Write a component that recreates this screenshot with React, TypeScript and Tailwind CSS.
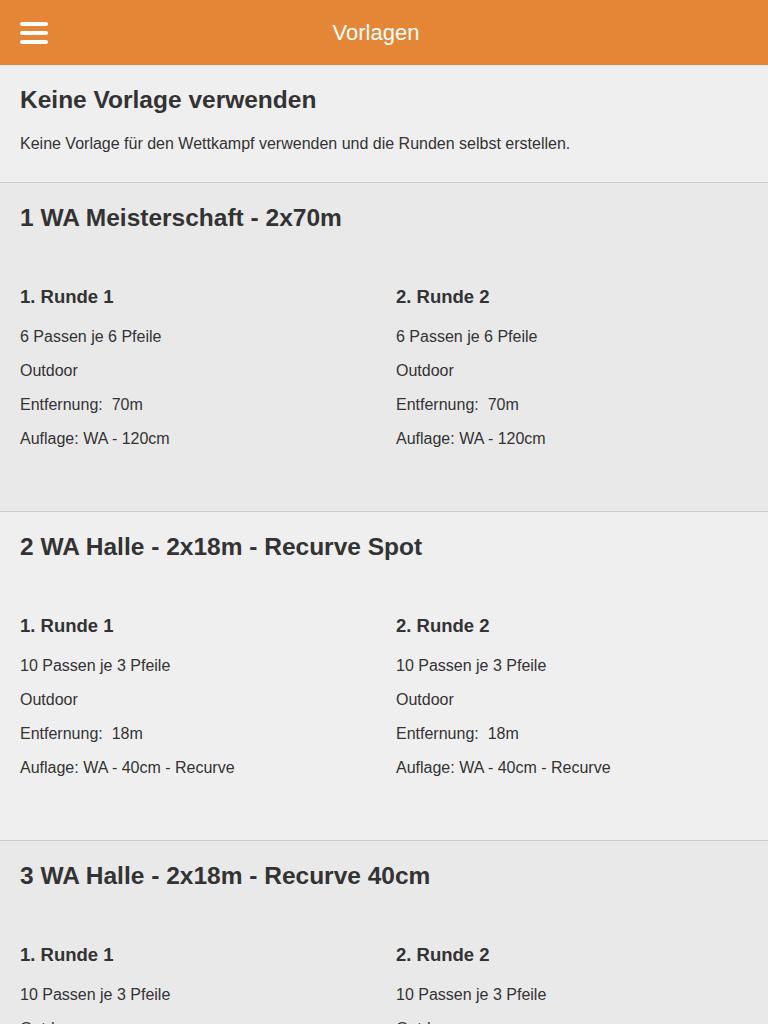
import React from "react";

type Round = {
  title: string;
  ends: string;
  place: string;
  distance: string;
  target: string;
};

type Template = {
  name: string;
  rounds: Round[];
};

const templates: Template[] = [
  {
    name: "1 WA Meisterschaft - 2x70m",
    rounds: [
      { title: "1. Runde 1", ends: "6 Passen je 6 Pfeile", place: "Outdoor", distance: "70m", target: "WA - 120cm" },
      { title: "2. Runde 2", ends: "6 Passen je 6 Pfeile", place: "Outdoor", distance: "70m", target: "WA - 120cm" },
    ],
  },
  {
    name: "2 WA Halle - 2x18m - Recurve Spot",
    rounds: [
      { title: "1. Runde 1", ends: "10 Passen je 3 Pfeile", place: "Outdoor", distance: "18m", target: "WA - 40cm - Recurve" },
      { title: "2. Runde 2", ends: "10 Passen je 3 Pfeile", place: "Outdoor", distance: "18m", target: "WA - 40cm - Recurve" },
    ],
  },
  {
    name: "3 WA Halle - 2x18m - Recurve 40cm",
    rounds: [
      { title: "1. Runde 1", ends: "10 Passen je 3 Pfeile", place: "Outdoor", distance: "18m", target: "WA - 40cm" },
      { title: "2. Runde 2", ends: "10 Passen je 3 Pfeile", place: "Outdoor", distance: "18m", target: "WA - 40cm" },
    ],
  },
];

const App: React.FC = () => {
  return (
    <div className="h-[1024px] overflow-hidden bg-[#efefef] font-['Liberation_Sans',Arial,sans-serif] text-[#333333]">
      {/* Header */}
      <header className="flex h-[65px] items-center bg-[#e48635] px-5">
        <button className="flex w-[28px] flex-col gap-[5px] focus:outline-none">
          <span className="block h-[4px] w-[28px] rounded-sm bg-white" />
          <span className="block h-[4px] w-[28px] rounded-sm bg-white" />
          <span className="block h-[4px] w-[28px] rounded-sm bg-white" />
        </button>
        <h1 className="flex-1 pr-[44px] text-center text-[22px] text-white">Vorlagen</h1>
      </header>

      {/* No template */}
      <section className="border-b border-[#cccccc] bg-[#efefef] px-5 pt-[21px] pb-[28px]">
        <h2 className="text-[24.5px] font-bold leading-[28px]">Keine Vorlage verwenden</h2>
        <p className="mt-[20px] text-[16px] leading-[20px]">
          Keine Vorlage für den Wettkampf verwenden und die Runden selbst erstellen.
        </p>
      </section>

      {/* Templates */}
      {templates.map((t, i) => (
        <section
          key={t.name}
          className={
            "border-b border-[#cccccc] px-5 pt-[21px] pb-[62px] " +
            (i % 2 === 0 ? "bg-[#e9e9e9]" : "bg-[#efefef]")
          }
        >
          <h2 className="text-[24.5px] font-bold leading-[28px]">{t.name}</h2>
          <div className="mt-[54px] grid grid-cols-[376px_1fr]">
            {t.rounds.map((r) => (
              <div key={r.title}>
                <h3 className="text-[18.5px] font-bold leading-[22px]">{r.title}</h3>
                <div className="mt-[19px] flex flex-col gap-[14px] text-[16px] leading-[20px]">
                  <p>{r.ends}</p>
                  <p>{r.place}</p>
                  <p>Entfernung:&nbsp; {r.distance}</p>
                  <p>Auflage: {r.target}</p>
                </div>
              </div>
            ))}
          </div>
        </section>
      ))}
    </div>
  );
};

export default App;
